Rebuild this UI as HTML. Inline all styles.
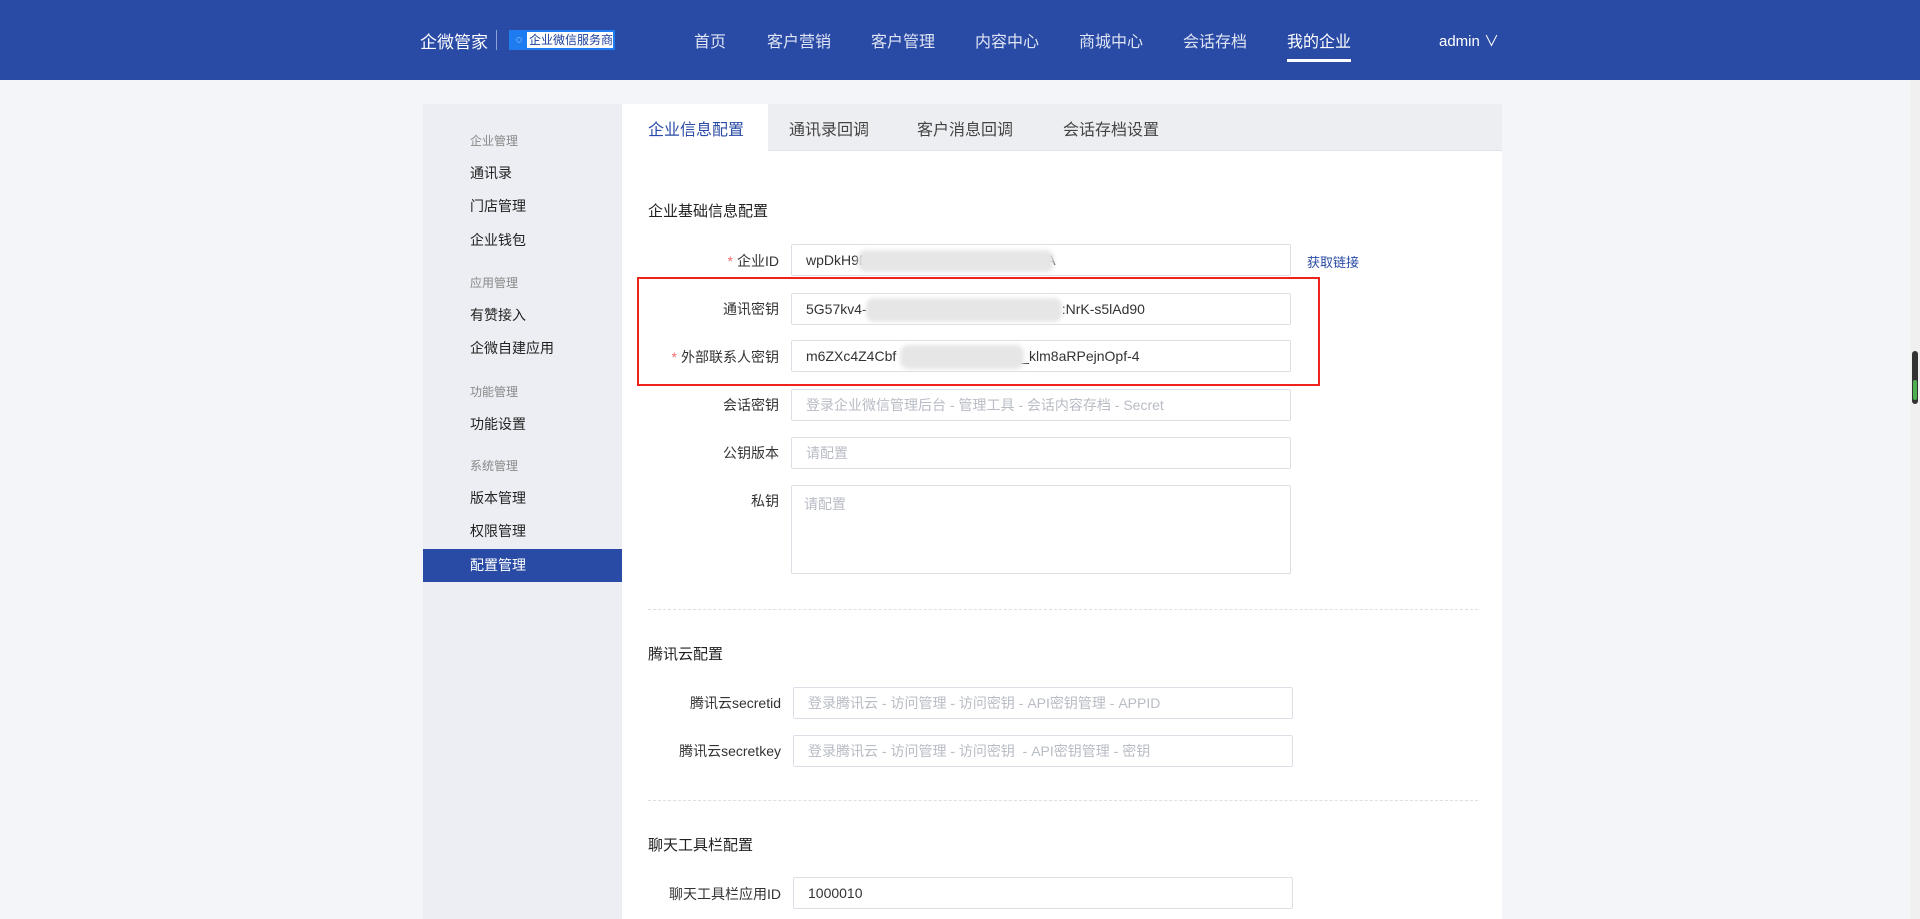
<!DOCTYPE html>
<html><head><meta charset="utf-8"><style>
*{margin:0;padding:0;box-sizing:border-box}
body{width:1920px;height:919px;overflow:hidden;background:#f4f5f8;font-family:"Liberation Sans","Noto Sans CJK SC",sans-serif;position:relative;color:#333}
.hd{position:absolute;left:0;top:0;width:1920px;height:80px;background:#2a4ba5;color:#fff}
.a{position:absolute;white-space:nowrap}
.nav{font-size:16px;color:#dfe5f5;top:28px}
.sb{position:absolute;left:423px;top:104px;width:199px;height:815px;background:#eceef3}
.grp{position:absolute;left:47px;font-size:12px;color:#888}
.it{position:absolute;left:47px;font-size:14px;color:#222}
.main{position:absolute;left:622px;top:104px;width:880px;height:815px;background:#fff}
.tabs{position:absolute;left:0;top:0;width:880px;height:47px;background:#edeef2;border-bottom:1px solid #e0e3ea}
.tab{position:absolute;top:12px;font-size:16px;color:#444}
.lbl{position:absolute;font-size:14px;color:#333;text-align:right;white-space:nowrap}
.inp{position:absolute;border:1px solid #dcdfe6;border-radius:2px;font-size:14px;color:#333;padding-left:14px;line-height:30px;white-space:nowrap;overflow:hidden}
.ph{color:#b8bcc4}
.blur{position:absolute;background:#e6e6e6;border-radius:8px;filter:blur(2px)}
.st{color:#f56c6c;margin-right:4px}
.sec{position:absolute;left:26px;font-size:15px;color:#222}
.dash{position:absolute;left:26px;width:830px;border-top:1px dashed #dcdfe6}
</style></head><body>
<div class="hd">
<div class="a" style="left:420px;top:28px;font-size:17px;color:#fff">企微管家</div>
<div class="a" style="left:496px;top:30px;width:1px;height:20px;background:#8da0d4"></div>
<div class="a" style="left:509px;top:30px;width:106px;height:20px;background:#fff;border:2px solid #1e7cf0"><span style="position:absolute;left:0;top:-2px;width:16px;height:20px;background:#1e7cf0;color:#fff;font-size:11px;line-height:20px;text-align:center">◌</span><span style="position:absolute;left:18px;top:1px;font-size:12px;color:#1a3d9a;line-height:14px">企业微信服务商</span></div>
<div class="a nav" style="left:694px">首页</div>
<div class="a nav" style="left:767px">客户营销</div>
<div class="a nav" style="left:871px">客户管理</div>
<div class="a nav" style="left:975px">内容中心</div>
<div class="a nav" style="left:1079px">商城中心</div>
<div class="a nav" style="left:1183px">会话存档</div>
<div class="a nav" style="left:1287px;color:#fff">我的企业</div>
<div class="a" style="left:1287px;top:59px;width:64px;height:3px;background:#fff"></div>
<div class="a" style="left:1439px;top:30px;font-size:15px;color:#fff">admin ∨</div>
</div>
<div class="a" style="left:1910px;top:80px;width:10px;height:839px;background:#f0f0f0"></div>
<div class="a" style="left:1912px;top:351px;width:6px;height:53px;background:#333;border-radius:3px"></div>
<div class="a" style="left:1913px;top:380px;width:4px;height:20px;background:#4caf50;border-radius:2px"></div>
<div class="sb">
<div class="grp" style="top:28px">企业管理</div>
<div class="it" style="top:59px">通讯录</div>
<div class="it" style="top:92px">门店管理</div>
<div class="it" style="top:126px">企业钱包</div>
<div class="grp" style="top:170px">应用管理</div>
<div class="it" style="top:201px">有赞接入</div>
<div class="it" style="top:234px">企微自建应用</div>
<div class="grp" style="top:279px">功能管理</div>
<div class="it" style="top:310px">功能设置</div>
<div class="grp" style="top:353px">系统管理</div>
<div class="it" style="top:384px">版本管理</div>
<div class="it" style="top:417px">权限管理</div>
<div style="position:absolute;left:0;top:445px;width:199px;height:33px;background:#2a4ba5"></div>
<div class="it" style="top:451px;color:#fff">配置管理</div>
</div>
<div class="main">
<div class="tabs">
<div style="position:absolute;left:0;top:0;width:146px;height:48px;background:#fff"></div>
<div class="tab" style="left:26px;color:#2a4ba5">企业信息配置</div>
<div class="tab" style="left:167px">通讯录回调</div>
<div class="tab" style="left:295px">客户消息回调</div>
<div class="tab" style="left:441px">会话存档设置</div>
</div>
<div class="sec" style="top:96px">企业基础信息配置</div>
<div class="lbl" style="right:723px;top:147px"><span class="st">*</span>企业ID</div>
<div class="inp" style="left:169px;top:140px;width:500px;height:32px">wpDkH9E<span style="margin-left:178px">A</span></div>
<div class="blur" style="left:236px;top:146px;width:196px;height:22px"></div>
<div class="a" style="left:685px;top:148px;font-size:13px;color:#2a4ba5">获取链接</div>
<div class="lbl" style="right:723px;top:195px">通讯密钥</div>
<div class="inp" style="left:169px;top:189px;width:500px;height:32px">5G57kv4-<span style="margin-left:195px">:NrK-s5lAd90</span></div>
<div class="blur" style="left:244px;top:194px;width:196px;height:24px"></div>
<div class="lbl" style="right:723px;top:243px"><span class="st">*</span>外部联系人密钥</div>
<div class="inp" style="left:169px;top:236px;width:500px;height:32px">m6ZXc4Z4Cbf<span style="margin-left:125px">_klm8aRPejnOpf-4</span></div>
<div class="blur" style="left:278px;top:241px;width:124px;height:24px"></div>
<div class="a" style="left:15px;top:173px;width:683px;height:109px;border:2px solid #f0231c"></div>
<div class="lbl" style="right:723px;top:291px">会话密钥</div>
<div class="inp ph" style="left:169px;top:285px;width:500px;height:32px">登录企业微信管理后台 - 管理工具 - 会话内容存档 - Secret</div>
<div class="lbl" style="right:723px;top:339px">公钥版本</div>
<div class="inp ph" style="left:169px;top:333px;width:500px;height:32px">请配置</div>
<div class="lbl" style="right:723px;top:387px">私钥</div>
<div class="inp ph" style="left:169px;top:381px;width:500px;height:89px;line-height:20px;padding-top:8px;padding-left:12px">请配置</div>
<div class="dash" style="top:505px"></div>
<div class="sec" style="top:539px">腾讯云配置</div>
<div class="lbl" style="right:721px;top:589px">腾讯云secretid</div>
<div class="inp ph" style="left:171px;top:583px;width:500px;height:32px">登录腾讯云 - 访问管理 - 访问密钥 - API密钥管理 - APPID</div>
<div class="lbl" style="right:721px;top:637px">腾讯云secretkey</div>
<div class="inp ph" style="left:171px;top:631px;width:500px;height:32px">登录腾讯云 - 访问管理 - 访问密钥 &nbsp;- API密钥管理 - 密钥</div>
<div class="dash" style="top:696px"></div>
<div class="sec" style="top:730px">聊天工具栏配置</div>
<div class="lbl" style="right:721px;top:780px">聊天工具栏应用ID</div>
<div class="inp" style="left:171px;top:773px;width:500px;height:32px">1000010</div>
</div>
</body></html>
